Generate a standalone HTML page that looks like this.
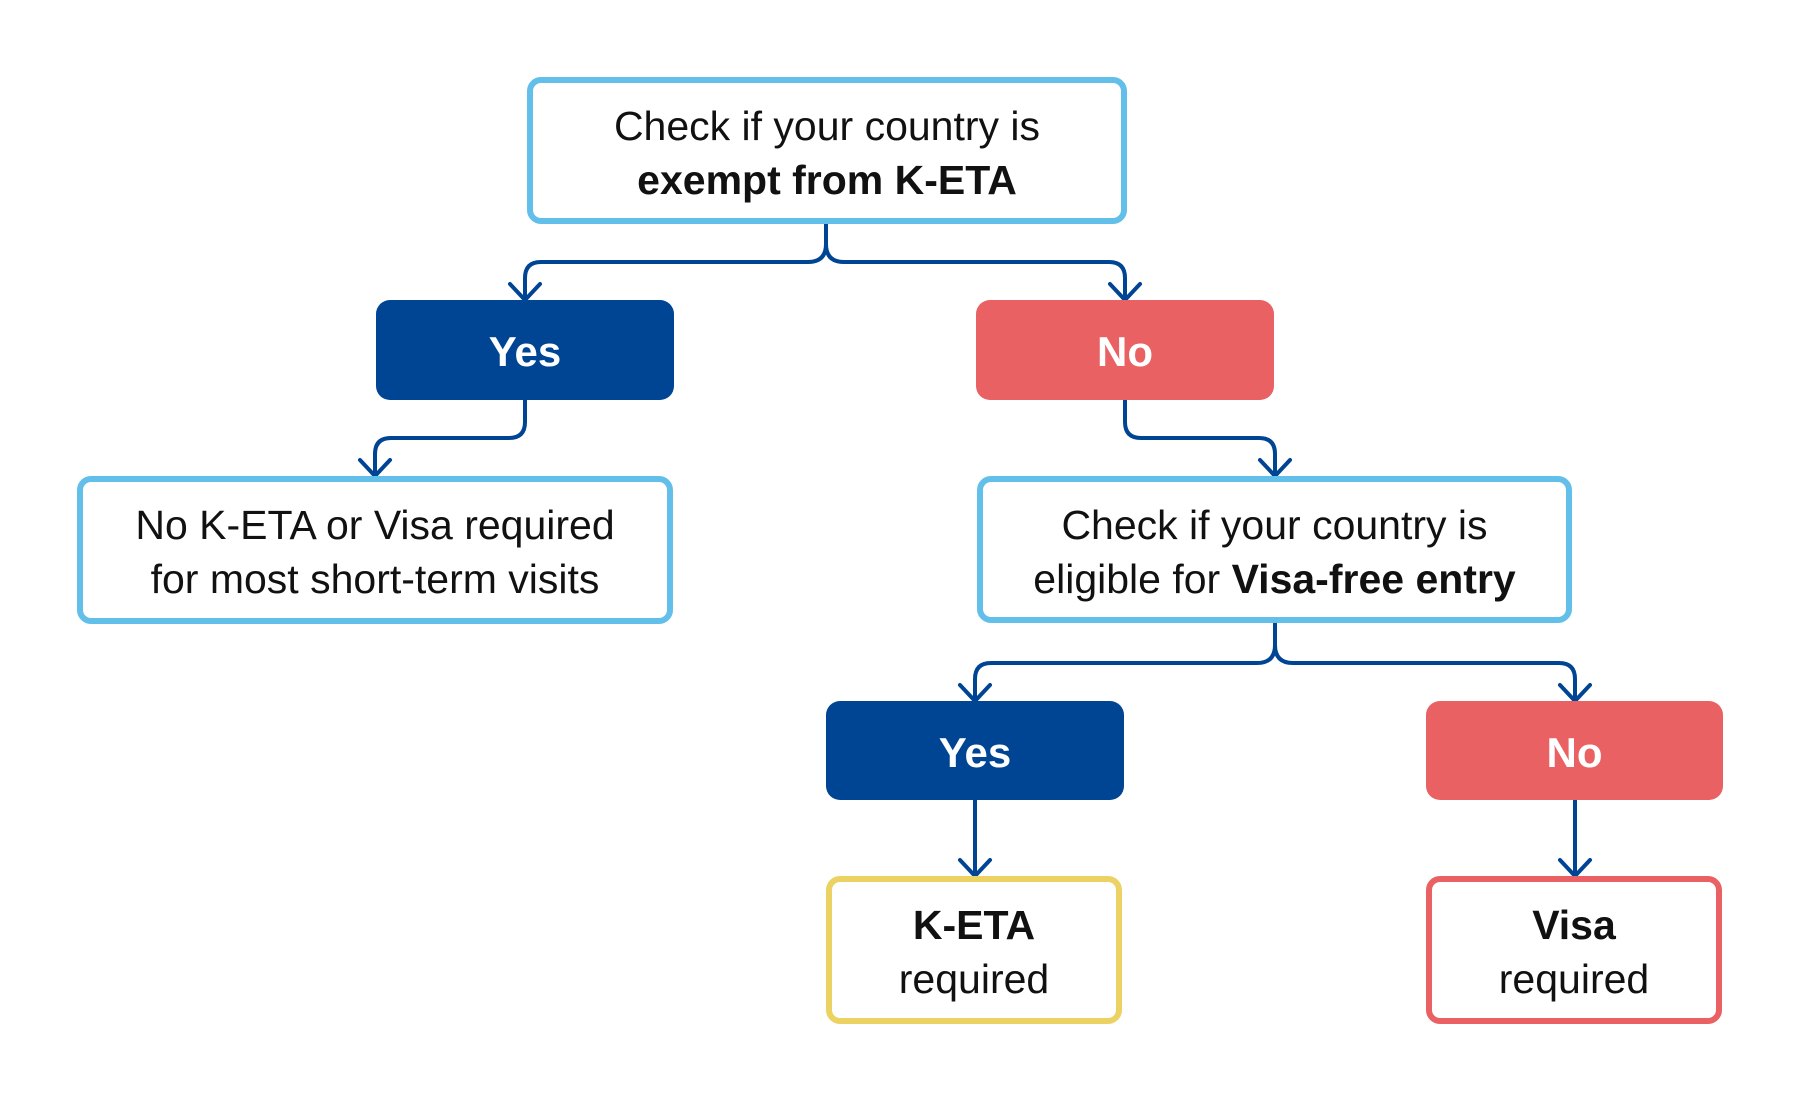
<!DOCTYPE html>
<html><head><meta charset="utf-8"><style>
html,body{margin:0;padding:0;background:#fff;width:1800px;height:1100px;overflow:hidden}
.b{position:absolute;box-sizing:border-box;display:flex;flex-direction:column;align-items:center;justify-content:center;text-align:center;font-family:"Liberation Sans",sans-serif;font-size:41px;line-height:54px;color:#111;border-radius:14px;padding-top:4px}
.q{border:6px solid #62bfea;background:#fff}
.y{background:#004494;color:#fff;font-weight:bold;font-size:42px}
.n{background:#ea6163;color:#fff;font-weight:bold;font-size:42px}
b{font-weight:bold}
svg{position:absolute;left:0;top:0}
</style></head><body>
<svg width="1800" height="1100" fill="none" stroke="#004494" stroke-width="4" stroke-linecap="round" stroke-linejoin="round">
<path d="M826 224 V244 Q826 262 808 262 H541 Q525 262 525 278 V298"/>
<path d="M826 244 Q826 262 844 262 H1109 Q1125 262 1125 278 V298"/>
<path d="M510 284 L525 300 L540 284 M1110 284 L1125 300 L1140 284"/>
<path d="M525 400 V422 Q525 438 509 438 H391 Q375 438 375 454 V474"/>
<path d="M360 460 L375 476 L390 460"/>
<path d="M1125 400 V422 Q1125 438 1141 438 H1259 Q1275 438 1275 454 V474"/>
<path d="M1260 460 L1275 476 L1290 460"/>
<path d="M1275 623 V645 Q1275 663 1257 663 H991 Q975 663 975 679 V699"/>
<path d="M1275 645 Q1275 663 1293 663 H1559 Q1575 663 1575 679 V699"/>
<path d="M960 685 L975 701 L990 685 M1560 685 L1575 701 L1590 685"/>
<path d="M975 800 V874 M1575 800 V874"/>
<path d="M960 860 L975 876 L990 860 M1560 860 L1575 876 L1590 860"/>
</svg>
<div class="b q" style="left:527px;top:77px;width:600px;height:147px"><div>Check if your country is</div><div><b>exempt from K-ETA</b></div></div>
<div class="b y" style="left:376px;top:300px;width:298px;height:100px">Yes</div>
<div class="b n" style="left:976px;top:300px;width:298px;height:100px">No</div>
<div class="b q" style="left:77px;top:476px;width:596px;height:148px"><div>No K-ETA or Visa required</div><div>for most short-term visits</div></div>
<div class="b q" style="left:977px;top:476px;width:595px;height:147px"><div>Check if your country is</div><div>eligible for <b>Visa-free entry</b></div></div>
<div class="b y" style="left:826px;top:701px;width:298px;height:99px">Yes</div>
<div class="b n" style="left:1426px;top:701px;width:297px;height:99px">No</div>
<div class="b q" style="left:826px;top:876px;width:296px;height:148px;border-color:#ebd262"><div><b>K-ETA</b></div><div>required</div></div>
<div class="b q" style="left:1426px;top:876px;width:296px;height:148px;border-color:#ea6163"><div><b>Visa</b></div><div>required</div></div>
</body></html>
